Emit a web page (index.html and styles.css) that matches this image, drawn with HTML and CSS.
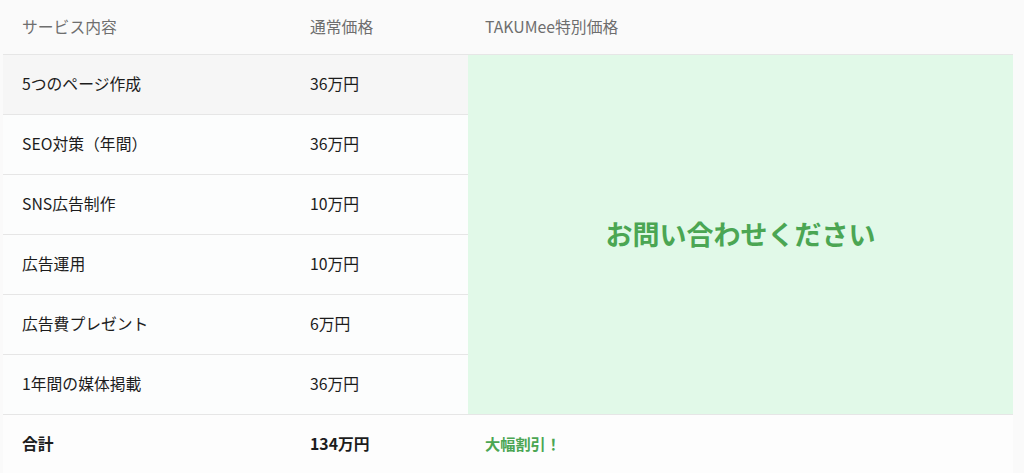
FILE: index.html
```html
<!DOCTYPE html>
<html lang="ja">
<head>
<meta charset="utf-8">
<link rel="stylesheet" href="styles.css">
</head>
<body>
<table class="price">
  <colgroup>
    <col class="c1"><col class="c2"><col class="c3">
  </colgroup>
  <thead>
    <tr><th>サービス内容</th><th>通常価格</th><th>TAKUMee特別価格</th></tr>
  </thead>
  <tbody>
    <tr class="first"><td>5つのページ作成</td><td>36万円</td><td class="special" rowspan="6">お問い合わせください</td></tr>
    <tr><td>SEO対策（年間）</td><td>36万円</td></tr>
    <tr><td>SNS広告制作</td><td>10万円</td></tr>
    <tr><td>広告運用</td><td>10万円</td></tr>
    <tr><td>広告費プレゼント</td><td>6万円</td></tr>
    <tr><td>1年間の媒体掲載</td><td>36万円</td></tr>
  </tbody>
  <tfoot>
    <tr><td>合計</td><td>134万円</td><td class="discount">大幅割引！</td></tr>
  </tfoot>
</table>
</body>
</html>
```

FILE: styles.css
```css
html, body {
  margin: 0;
  background: #fafafa;
}
body {
  padding: 0 11px 0 3px;
  font-family: "Noto Sans CJK JP", "Noto Sans", sans-serif;
  color: #1c1c1c;
}
.price {
  width: 1010px;
  border-collapse: collapse;
  table-layout: fixed;
}
.c1 { width: 288px; }
.c2 { width: 177px; }
.c3 { width: 545px; }
.price th {
  height: 52px;
  padding: 0 0 2px 19px;
  text-align: left;
  font-weight: 400;
  font-size: 15.8px;
  color: #6e6e6e;
  border-bottom: 1px solid #e6e6e6;
}
.price th:nth-child(3) { padding-left: 17px; }
.price td {
  height: 56px;
  padding: 0 0 3px 19px;
  font-size: 15.8px;
  border-bottom: 1px solid #e6e6e6;
  background: #fcfdfd;
}
.price tr.first td:not(.special) { background: #f6f6f6; }
.price td.special {
  background: #e1f9e8;
  text-align: center;
  padding: 0 0 2px;
  font-size: 27px;
  font-weight: 700;
  color: #4ba653;
}
.price tfoot td {
  height: 56px;
  border-bottom: none;
  font-weight: 700;
  background: #fdfdfd;
}
.price tfoot td.discount {
  padding-left: 17px;
  color: #4ba653;
  font-size: 15.2px;
}
```
